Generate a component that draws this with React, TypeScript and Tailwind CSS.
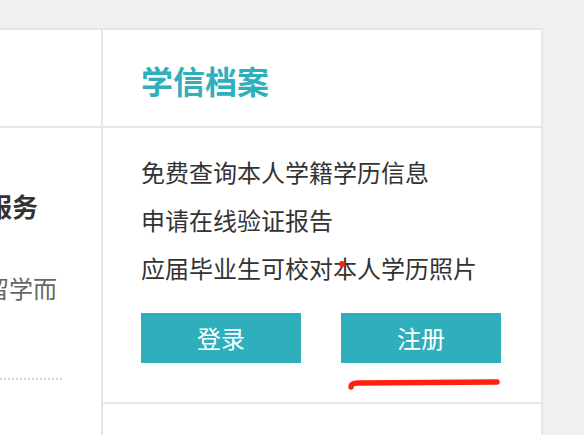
import React from "react";

export default function App() {
  const font = { fontFamily: '"Noto Sans CJK SC", "Noto Sans", sans-serif' };
  return (
    <div
      className="relative w-[584px] h-[435px] overflow-hidden bg-[#f0f0f0] pt-[28px]"
      style={font}
    >
      <div className="w-[543px] h-[407px] bg-white border-t-2 border-r-2 border-[#e6e6e6] flex flex-col">
        {/* header row */}
        <div className="flex h-[98px] border-b-2 border-[#e6e6e6] shrink-0">
          <div className="w-[101px] shrink-0" />
          <div className="flex-1 border-l-2 border-[#e6e6e6] flex items-center pl-[38px] pt-[4px]">
            <h2 className="text-[32px] leading-[40px] font-bold text-[#2eafbb]">
              学信档案
            </h2>
          </div>
        </div>
        {/* body row */}
        <div className="flex flex-1">
          <div className="w-[101px] shrink-0 overflow-hidden pt-[58px]">
            <div className="flex justify-end pr-[63px] whitespace-nowrap">
              <span className="text-[26px] leading-[40px] font-bold text-[#333333]">
                学历认证服务
              </span>
            </div>
            <div className="flex justify-end pr-[44px] whitespace-nowrap mt-[44px]">
              <span className="text-[24px] leading-[36px] text-[#666666]">
                为方便出国留学而
              </span>
            </div>
            <div className="mt-[72px] w-[62px] border-b-2 border-dotted border-[#d4d4d4]" />
          </div>
          <div className="flex-1 border-l-2 border-[#e6e6e6] flex flex-col">
            <div className="pl-[38px] pt-[20px] h-[276px] border-b-2 border-[#e6e6e6]">
              <ul className="text-[24px] leading-[48px] text-[#333333]">
                <li>免费查询本人学籍学历信息</li>
                <li>申请在线验证报告</li>
                <li>应届毕业生可校对本人学历照片</li>
              </ul>
              <div className="flex gap-[40px] mt-[21px]">
                <button className="w-[160px] h-[50px] bg-[#2eafbb] text-white text-[24px] leading-[50px]">
                  登录
                </button>
                <button className="w-[160px] h-[50px] bg-[#2eafbb] text-white text-[24px] leading-[50px]">
                  注册
                </button>
              </div>
            </div>
          </div>
        </div>
      </div>
      <svg
        className="absolute left-0 top-0 pointer-events-none"
        width="584"
        height="435"
        viewBox="0 0 584 435"
      >
        <circle cx="342" cy="264" r="3" fill="#ff2010" />
        <path
          d="M351 387 Q351 383 358 383 L497 382"
          stroke="#ff2010"
          strokeWidth="5.5"
          strokeLinecap="round"
          fill="none"
        />
      </svg>
    </div>
  );
}
